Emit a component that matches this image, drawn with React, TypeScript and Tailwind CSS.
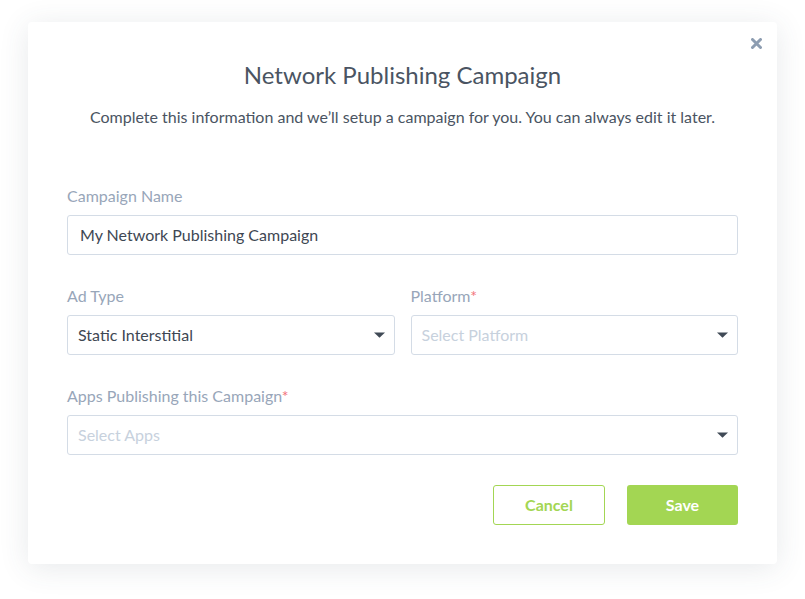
import React from "react";

function Caret() {
  return (
    <svg width="11" height="6" viewBox="0 0 11 6" className="shrink-0">
      <path d="M0 0.5 L11 0.5 L5.5 5.8 Z" fill="#404a56" />
    </svg>
  );
}

function Label({ text, required }: { text: string; required?: boolean }) {
  return (
    <div className="mb-[9px] text-[16px] leading-[20px] text-[#98a6b9]">
      {text}
      {required && <span className="text-[#f2747a]">*</span>}
    </div>
  );
}

function SelectBox({ value, placeholder }: { value?: string; placeholder: string }) {
  return (
    <div className="flex h-[40px] items-center justify-between rounded-[3px] border border-[#d4dce6] bg-white pl-[10px] pr-[9px]">
      <span className={`text-[16px] ${value ? "text-[#3e4753]" : "text-[#c7d1dd]"}`}>
        {value ?? placeholder}
      </span>
      <Caret />
    </div>
  );
}

export default function App() {
  return (
    <div
      className="min-h-[599px] w-[805px] bg-white pl-[28px] pt-[22px]"
      style={{ fontFamily: "Lato, 'Noto Sans', sans-serif" }}
    >
      <div className="relative w-[749px] h-[542px] rounded-[4px] bg-white px-[39px] pt-[38px] shadow-[0_4px_30px_rgba(60,70,90,0.12)]">
        <button className="absolute right-[11px] top-[12px] p-1" aria-label="Close">
          <svg width="11" height="11" viewBox="0 0 11 11">
            <path d="M1.5 1.5 L9.5 9.5 M9.5 1.5 L1.5 9.5" stroke="#8d9db1" strokeWidth="3" strokeLinecap="round" />
          </svg>
        </button>

        <h1 className="text-center text-[24px] leading-[30px] text-[#4a5462]">
          Network Publishing Campaign
        </h1>
        <p className="mt-[17px] text-center text-[16px] leading-[20px] text-[#4a5462]">
          Complete this information and we’ll setup a campaign for you. You can always edit it later.
        </p>

        <div className="mt-[59px]">
          <Label text="Campaign Name" />
          <div className="flex h-[40px] items-center rounded-[3px] border border-[#d4dce6] px-[12px] text-[16px] text-[#3e4753]">
            My Network Publishing Campaign
          </div>
        </div>

        <div className="mt-[31px] grid grid-cols-2 gap-[16px]">
          <div>
            <Label text="Ad Type" />
            <SelectBox value="Static Interstitial" placeholder="" />
          </div>
          <div>
            <Label text="Platform" required />
            <SelectBox placeholder="Select Platform" />
          </div>
        </div>

        <div className="mt-[31px]">
          <Label text="Apps Publishing this Campaign" required />
          <SelectBox placeholder="Select Apps" />
        </div>

        <div className="mt-[30px] flex justify-end gap-[22px]">
          <button className="h-[40px] w-[112px] rounded-[3px] border border-[#a3d653] bg-white text-[16px] font-bold text-[#a3d653]">
            Cancel
          </button>
          <button className="h-[40px] w-[111px] rounded-[3px] bg-[#a3d653] text-[16px] font-bold text-white">
            Save
          </button>
        </div>
      </div>
    </div>
  );
}
